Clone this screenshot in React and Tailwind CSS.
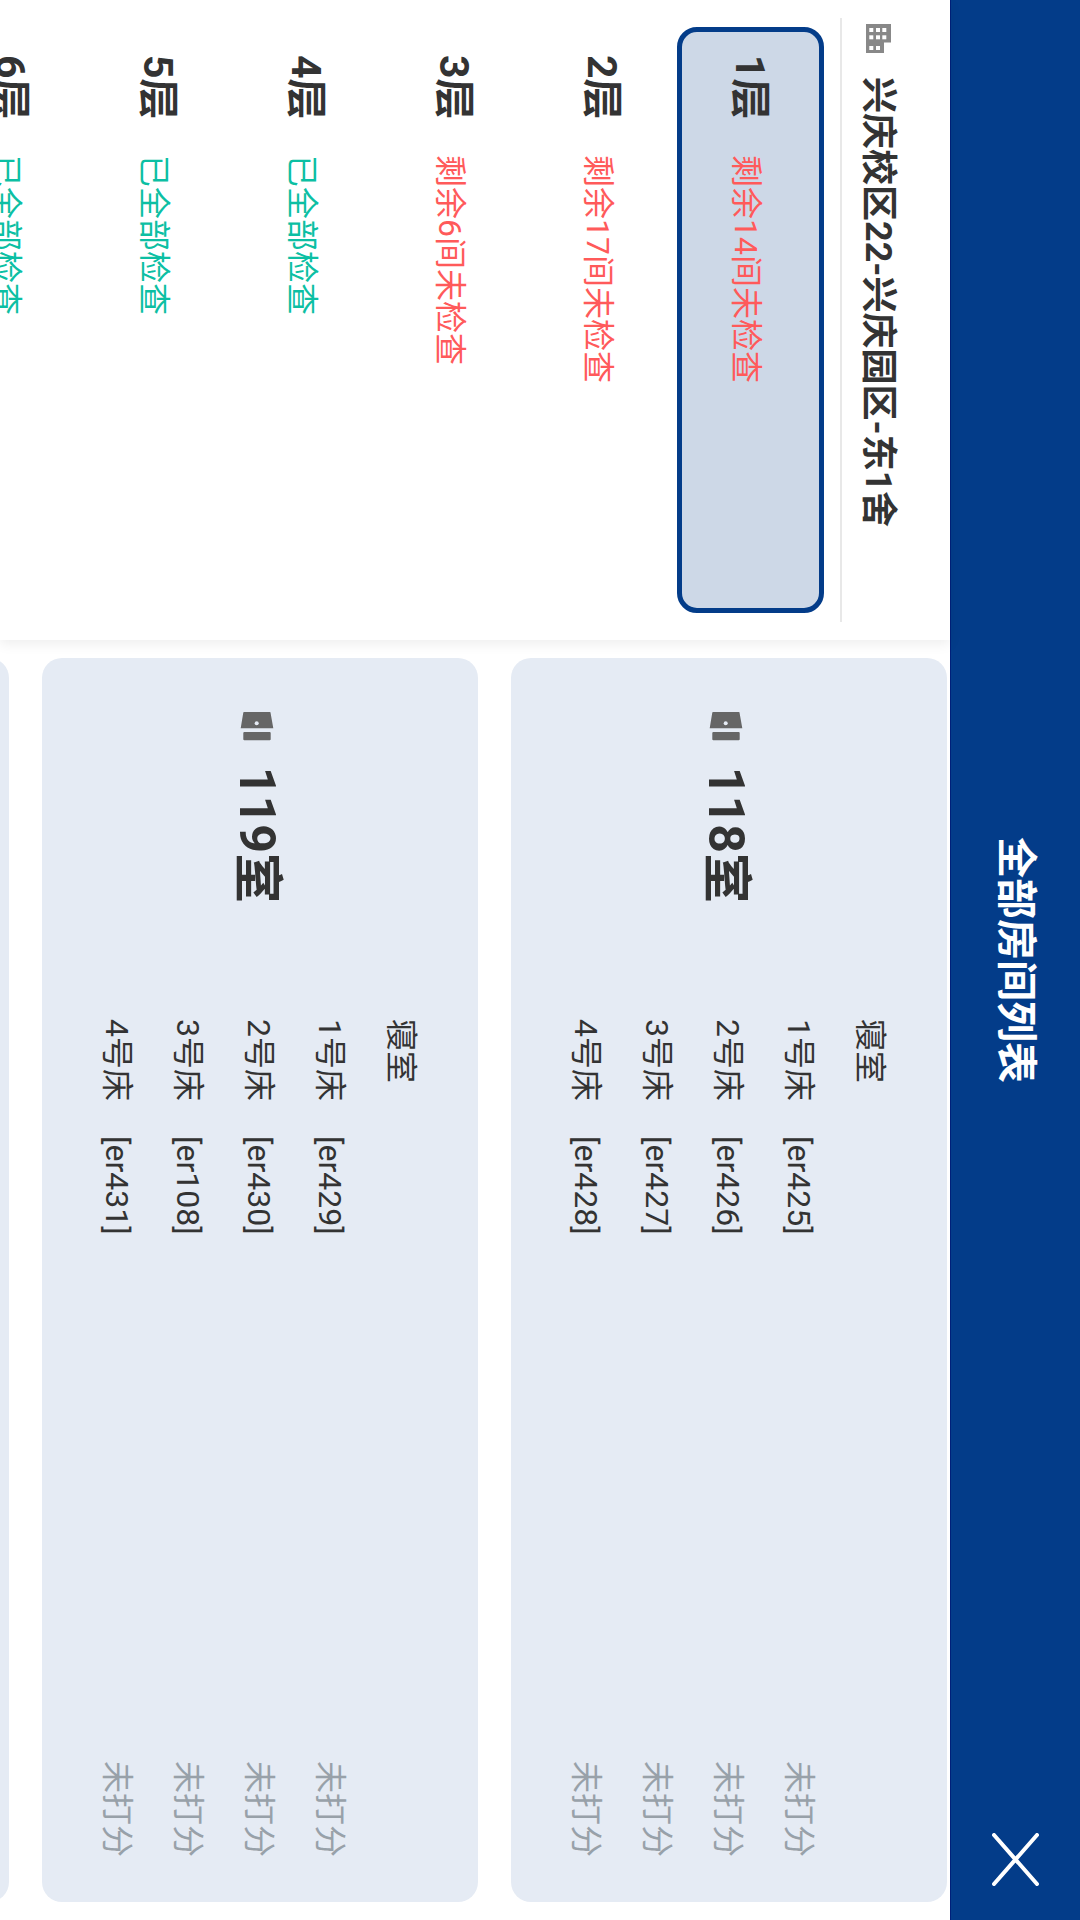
const floors = [
  { id: 1, status: '剩余14间未检查', done: false, active: true },
  { id: 2, status: '剩余17间未检查', done: false },
  { id: 3, status: '剩余6间未检查', done: false },
  { id: 4, status: '已全部检查', done: true },
  { id: 5, status: '已全部检查', done: true },
  { id: 6, status: '已全部检查', done: true },
];

const rooms = [
  { name: '118室', beds: ['er425', 'er426', 'er427', 'er428'] },
  { name: '119室', beds: ['er429', 'er430', 'er108', 'er431'] },
];

function BuildingIcon() {
  return (
    <svg viewBox="0 0 30 25" className="w-[30px] h-[25px] shrink-0">
      <path d="M0 0H18.5V7H29V25H0Z" fill="#888888" />
      {[[4, 4.7], [11.3, 4.7], [4, 11], [11.3, 11], [22, 11], [4, 17.7], [11.3, 17.7], [22, 17.7]].map(([x, y], i) => (
        <rect key={i} x={x} y={y} width="4" height="4" fill="#ffffff" />
      ))}
    </svg>
  );
}

function DoorIcon() {
  return (
    <svg viewBox="0 0 30 34" className="w-[32px] h-[34px] shrink-0">
      <path d="M1 4Q1 3.5 1.5 3.5L17.3 0.7V33.3L1.5 30.7Q1 30.5 1 30Z" fill="#666666" />
      <rect x="21" y="3.3" width="8.3" height="27.4" rx="1" fill="#666666" />
      <circle cx="12.3" cy="17.3" r="2" fill="#e5ebf4" />
    </svg>
  );
}

function RoomCard({ room }) {
  return (
    <div className="h-[436px] shrink-0 rounded-[20px] bg-[#e5ebf4] flex items-center pl-[52px]">
      <div className="w-[309px] shrink-0 flex items-center gap-[25px] mt-[5px]">
        <DoorIcon />
        <span className="text-[50px] font-bold text-[#333333] leading-none">{room.name}</span>
      </div>
      <div className="w-[838px] text-[32px] text-[#333333] mt-[2px]">
        <div className="h-[71px] flex items-center">寝室</div>
        {room.beds.map((bed, i) => (
          <div key={bed} className="h-[71px] flex items-center">
            <span className="w-[117px]">{i + 1}号床</span>
            <span>[{bed}]</span>
            <span className="ml-auto text-[#98a1a9]">未打分</span>
          </div>
        ))}
      </div>
    </div>
  );
}

export default function App() {
  return (
    <div className="w-[1080px] h-[1920px] overflow-hidden bg-white">
      <div className="w-[1920px] h-[1080px] flex flex-col origin-top-left translate-x-[1080px] rotate-90 font-[Roboto,'Noto_Sans_CJK_SC',sans-serif]">
        <header className="relative h-[130px] shrink-0 flex items-center justify-center bg-[#033c89] border-b border-[#00207a]">
          <h1 className="text-[41px] font-bold text-white">全部房间列表</h1>
          <svg viewBox="0 0 53 47" className="absolute right-[34px] top-[41px] w-[53px] h-[47px]">
            <path d="M2 2L51 45M51 2L2 45" stroke="#ffffff" strokeWidth="4" strokeLinecap="round" />
          </svg>
        </header>

        <div className="flex-1 min-h-0 flex">
          <aside className="relative z-10 w-[640px] shrink-0 bg-white shadow-[4px_0_12px_rgba(0,0,0,0.07)] overflow-hidden">
            <div className="mx-[18px] h-[110px] flex items-center gap-[23px] pl-[6px] pt-[35px] border-b-2 border-[#e8e8e8]">
              <BuildingIcon />
              <span className="text-[36px] font-bold text-[#333333] whitespace-nowrap">兴庆校区22-兴庆园区-东1舍</span>
            </div>
            <div className="mt-[16px] mx-[27px] flex flex-col gap-px">
              {floors.map((f) => (
                <div
                  key={f.id}
                  className={`h-[147px] shrink-0 flex items-center pl-[23px] pt-[3px] rounded-[20px] ${f.active ? 'border-[5px] border-[#033c89] bg-[#cdd8e7]' : 'border-[5px] border-transparent'}`}
                >
                  <span className="w-[100px] shrink-0 text-[41px] font-bold text-[#333333]">{f.id}层</span>
                  <span className={`text-[32px] mt-[5px] ${f.done ? 'text-[#0cbfa3]' : 'text-[#ff5a5a]'}`}>{f.status}</span>
                </div>
              ))}
            </div>
          </aside>

          <main className="flex-1 min-w-0 overflow-hidden flex flex-col gap-[33px] pt-[3px] pl-[18px] pr-[18px]">
            {rooms.map((r) => <RoomCard key={r.name} room={r} />)}
            <div className="h-[436px] shrink-0 rounded-[20px] bg-[#e5ebf4]" />
          </main>
        </div>
      </div>
    </div>
  );
}
